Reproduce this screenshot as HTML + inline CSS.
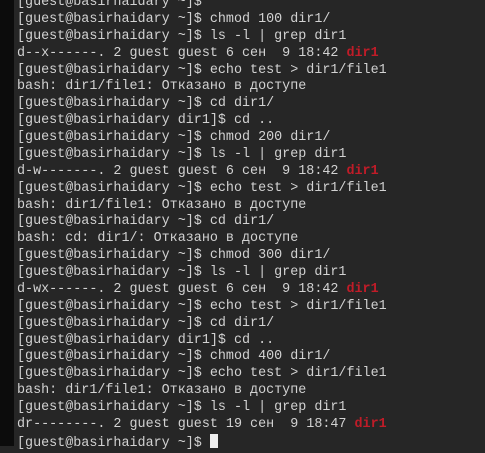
<!DOCTYPE html>
<html><head><meta charset="utf-8"><style>
html,body{margin:0;padding:0;width:485px;height:446px;overflow:hidden;background:#262626;}
.strip{position:absolute;left:0;top:0;width:14px;height:446px;background:#0c0c0c;}
pre{position:absolute;left:17px;top:-5px;margin:0;font-family:"Liberation Mono","DejaVu Sans Mono",monospace;font-size:13.4px;line-height:16.88px;color:#d2d2d2;}
b{color:#c01c28;}
.cur{display:inline-block;width:8px;height:14px;background:#eee;vertical-align:-2px;}
</style></head><body><div class="strip"></div>
<pre>[guest@basirhaidary ~]$
[guest@basirhaidary ~]$ chmod 100 dir1/
[guest@basirhaidary ~]$ ls -l | grep dir1
d--x------. 2 guest guest 6 сен  9 18:42 <b>dir1</b>
[guest@basirhaidary ~]$ echo test &gt; dir1/file1
bash: dir1/file1: Отказано в доступе
[guest@basirhaidary ~]$ cd dir1/
[guest@basirhaidary dir1]$ cd ..
[guest@basirhaidary ~]$ chmod 200 dir1/
[guest@basirhaidary ~]$ ls -l | grep dir1
d-w-------. 2 guest guest 6 сен  9 18:42 <b>dir1</b>
[guest@basirhaidary ~]$ echo test &gt; dir1/file1
bash: dir1/file1: Отказано в доступе
[guest@basirhaidary ~]$ cd dir1/
bash: cd: dir1/: Отказано в доступе
[guest@basirhaidary ~]$ chmod 300 dir1/
[guest@basirhaidary ~]$ ls -l | grep dir1
d-wx------. 2 guest guest 6 сен  9 18:42 <b>dir1</b>
[guest@basirhaidary ~]$ echo test &gt; dir1/file1
[guest@basirhaidary ~]$ cd dir1/
[guest@basirhaidary dir1]$ cd ..
[guest@basirhaidary ~]$ chmod 400 dir1/
[guest@basirhaidary ~]$ echo test &gt; dir1/file1
bash: dir1/file1: Отказано в доступе
[guest@basirhaidary ~]$ ls -l | grep dir1
dr--------. 2 guest guest 19 сен  9 18:47 <b>dir1</b>
[guest@basirhaidary ~]$ <span class="cur"></span></pre>
</body></html>
